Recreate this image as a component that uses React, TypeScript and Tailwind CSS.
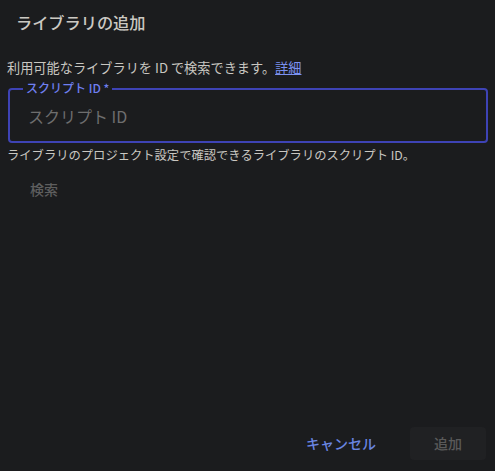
export default function App() {
  return (
    <div
      className="flex h-[471px] w-[495px] flex-col bg-[#1b1c1e] text-[#c9c7c1]"
      style={{ fontFamily: '"Noto Sans CJK JP", "Noto Sans", sans-serif' }}
    >
      {/* Title */}
      <h2 className="px-4 pt-[9px] text-[16.2px] font-medium leading-[26px] text-[#cbc9c3]">
        ライブラリの追加
      </h2>

      {/* Body */}
      <div className="flex flex-1 flex-col px-[7px] pt-[24px]">
        <p className="text-[13.2px] leading-[18px] text-[#c9c7c1]">
          利用可能なライブラリを ID で検索できます。
          <a href="#" className="text-[#7b91f0] underline">
            詳細
          </a>
        </p>

        {/* Outlined field */}
        <div className="relative ml-[1px] mt-[11px] flex h-[55px] items-center rounded-[4px] border-2 border-[#3e43b5] pl-[18px] pr-[10px]">
          <label className="absolute left-[13px] top-[-9px] bg-[#1b1c1e] px-[3px] text-[12px] font-medium leading-[14px] text-[#6f7ff0]">
            スクリプト ID *
          </label>
          <input
            className="w-full bg-transparent text-[16px] text-[#d0d0d0] outline-none placeholder:text-[#6e6e6e]"
            placeholder="スクリプト ID"
          />
        </div>

        <p className="mt-[4px] text-[12.3px] leading-[16px] text-[#c9c7c1]">
          ライブラリのプロジェクト設定で確認できるライブラリのスクリプト ID。
        </p>

        <div className="mt-[13px] pl-[23px]">
          <button className="text-[14px] font-medium leading-[20px] text-[#5e5e5e]">
            検索
          </button>
        </div>

        <div className="mt-auto flex items-center justify-end gap-[34px] pb-[11px] pr-[2px]">
          <button className="text-[14px] font-medium text-[#6a86e2]">
            キャンセル
          </button>
          <button className="h-[33px] w-[76px] rounded-[4px] bg-[#202123] text-[14px] font-medium text-[#5a5a5a]">
            追加
          </button>
        </div>
      </div>
    </div>
  );
}
